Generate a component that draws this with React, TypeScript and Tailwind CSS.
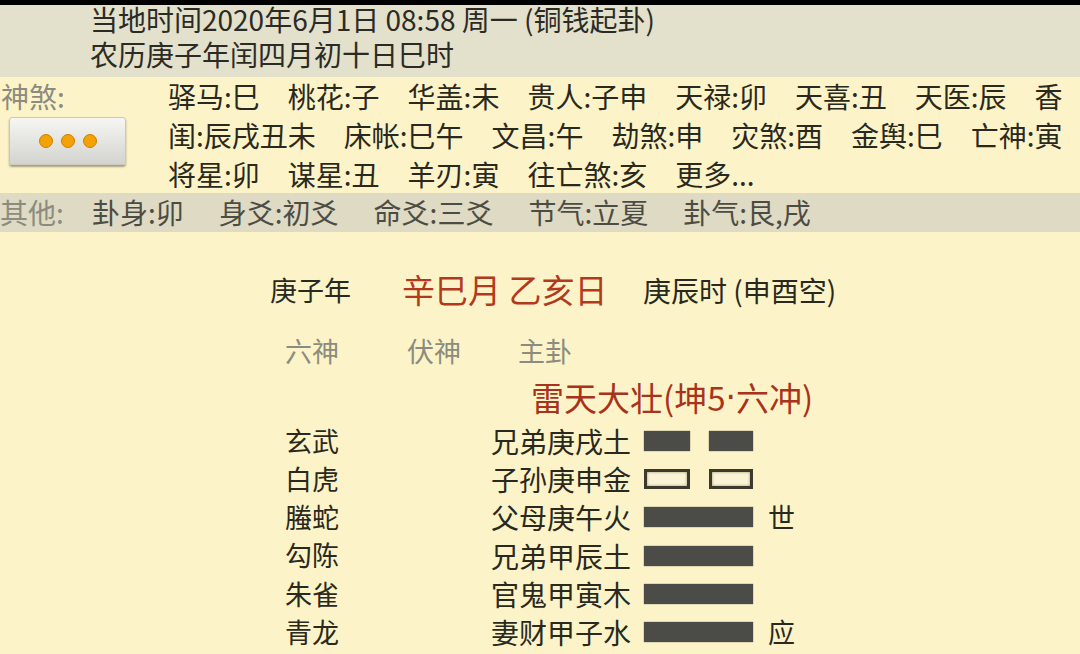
import React from "react";

const FONT = { fontFamily: '"Noto Sans CJK SC", "Noto Sans", sans-serif' };

function Yao({ kind }: { kind: "yin" | "yang" | "oldYin" }) {
  if (kind === "yang") {
    return <div className="w-[109px] h-[20px] bg-[#4b4b48] shadow-[0_0_1px_#4b4b48]" />;
  }
  if (kind === "yin") {
    return (
      <div className="flex w-[109px] h-[20px] gap-[19px]">
        <div className="w-[46px] h-[20px] bg-[#4b4b48] shadow-[0_0_1px_#4b4b48]" />
        <div className="w-[44px] h-[20px] bg-[#4b4b48] shadow-[0_0_1px_#4b4b48]" />
      </div>
    );
  }
  return (
    <div className="flex w-[109px] h-[20px] gap-[19px]">
      <div className="w-[46px] h-[20px] border-[3px] border-[#3d3a2c] bg-[#fbf3d6] shadow-[inset_0_0_3px_#9c9670]" />
      <div className="w-[44px] h-[20px] border-[3px] border-[#3d3a2c] bg-[#fbf3d6] shadow-[inset_0_0_3px_#9c9670]" />
    </div>
  );
}

const rows: { god: string; main: string; kind: "yin" | "yang" | "oldYin"; mark?: string }[] = [
  { god: "玄武", main: "兄弟庚戌土", kind: "yin" },
  { god: "白虎", main: "子孙庚申金", kind: "oldYin" },
  { god: "螣蛇", main: "父母庚午火", kind: "yang", mark: "世" },
  { god: "勾陈", main: "兄弟甲辰土", kind: "yang" },
  { god: "朱雀", main: "官鬼甲寅木", kind: "yang" },
  { god: "青龙", main: "妻财甲子水", kind: "yang", mark: "应" },
];

export default function App() {
  return (
    <div className="w-[1080px] h-[654px] overflow-hidden bg-[#fcf4c8] text-[#2a2920]" style={FONT}>
      <div className="h-[5px] bg-black" />
      {/* header */}
      <div className="h-[72px] bg-[#e3e0cc] pl-[90px] text-[28px] text-[#2b2b26]">
        <div className="h-[29px] leading-[29px] whitespace-nowrap">当地时间2020年6月1日 08:58 周一 (铜钱起卦)</div>
        <div className="h-[39px] leading-[39px] pt-[1px] whitespace-nowrap">农历庚子年闰四月初十日巳时</div>
      </div>
      {/* shensha */}
      <div className="flex h-[116px] text-[28px]">
        <div className="w-[168px] shrink-0">
          <div className="h-[39px] leading-[39px] text-[#8c8b80] pl-[1px]">神煞:</div>
          <div className="ml-[9px] mt-[1px] w-[117px] h-[48px] rounded-[3px] border border-[#c9c8c0] bg-gradient-to-b from-[#f6f6f3] to-[#d3d3cf] shadow-[0_2px_2px_rgba(0,0,0,0.35)] flex items-center justify-center gap-[8px]">
            <div className="w-[14px] h-[14px] rounded-full bg-[#f2a202] border border-[#d07f00]" />
            <div className="w-[14px] h-[14px] rounded-full bg-[#f2a202] border border-[#d07f00]" />
            <div className="w-[14px] h-[14px] rounded-full bg-[#f2a202] border border-[#d07f00]" />
          </div>
        </div>
        <div className="flex-1 whitespace-nowrap">
          <div className="h-[39px] leading-[39px] flex gap-[28px]">
            <span>驿马:巳</span><span>桃花:子</span><span>华盖:未</span><span>贵人:子申</span><span>天禄:卯</span><span>天喜:丑</span><span>天医:辰</span><span>香</span>
          </div>
          <div className="h-[39px] leading-[39px] flex gap-[28px]">
            <span>闺:辰戌丑未</span><span>床帐:巳午</span><span>文昌:午</span><span>劫煞:申</span><span>灾煞:酉</span><span>金舆:巳</span><span>亡神:寅</span>
          </div>
          <div className="h-[38px] leading-[38px] flex gap-[28px]">
            <span>将星:卯</span><span>谋星:丑</span><span>羊刃:寅</span><span>往亡煞:亥</span><span>更多...</span>
          </div>
        </div>
      </div>
      {/* other */}
      <div className="h-[39px] leading-[39px] bg-[#dedac3] flex text-[28px] whitespace-nowrap">
        <span className="w-[92px] shrink-0 text-[#8c8b80]">其他:</span>
        <div className="flex gap-[35px] text-[#4d4c44]">
          <span>卦身:卯</span><span>身爻:初爻</span><span>命爻:三爻</span><span>节气:立夏</span><span>卦气:艮,戌</span>
        </div>
      </div>
      {/* main */}
      <div className="pt-[38px]">
        <div className="h-[40px] flex items-center pl-[270px] whitespace-nowrap">
          <span className="text-[27px] w-[132px]">庚子年</span>
          <span className="text-[33px] text-[#b23a1c] w-[241px]">辛巳月 乙亥日</span>
          <span className="text-[28px]">庚辰时 (申酉空)</span>
        </div>
        <div className="mt-[21px] h-[40px] flex items-center pl-[285px] text-[27px] text-[#8c8b80]">
          <span className="w-[122px]">六神</span>
          <span className="w-[111px]">伏神</span>
          <span>主卦</span>
        </div>
        <div className="mt-[7px] h-[40px] flex items-center pl-[531px] text-[33px] text-[#a8321a] whitespace-nowrap">
          雷天大壮(坤5<span style={{ fontFamily: '"DejaVu Sans", sans-serif' }}>·</span>六冲)
        </div>
        <div className="mt-[4px]">
          {rows.map((r) => (
            <div key={r.god} className="h-[38.2px] flex items-center pl-[285px] text-[27px]">
              <span className="w-[206px]">{r.god}</span>
              <span className="w-[153px] text-[28px] whitespace-nowrap">{r.main}</span>
              <Yao kind={r.kind} />
              {r.mark && <span className="ml-[15px]">{r.mark}</span>}
            </div>
          ))}
        </div>
      </div>
    </div>
  );
}
